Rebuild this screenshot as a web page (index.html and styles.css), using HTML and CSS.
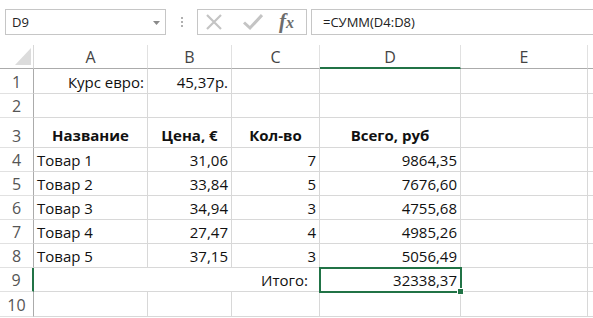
FILE: index.html
```html
<!DOCTYPE html>
<html lang="ru">
<head>
<meta charset="utf-8">
<link rel="stylesheet" href="styles.css">
</head>
<body>
<div class="app">
  <div class="fbar">
    <div class="namebox">
      <span class="nb-text">D9</span>
      <svg class="nb-arrow" width="7" height="4" viewBox="0 0 7 4"><path d="M0 0h7L3.5 4z" fill="#8a8a8a"/></svg>
    </div>
    <div class="dots"><i></i><i></i><i></i></div>
    <div class="iconbox">
      <svg class="ic ic-x" width="18" height="18" viewBox="0 0 18 18"><path d="M2 2L16 16M16 2L2 16" stroke="#c4c4c4" stroke-width="2.2" fill="none"/></svg>
      <svg class="ic ic-ok" width="20" height="18" viewBox="0 0 20 18"><path d="M1 9.5L7 15L19 2" stroke="#c4c4c4" stroke-width="3" fill="none"/></svg>
      <span class="fx">f<span class="fx-x">x</span></span>
    </div>
    <div class="formula">=СУММ(D4:D8)</div>
  </div>

  <div class="sheet">
    <div class="corner"><span class="tri"></span></div>
    <div class="ch">A</div>
    <div class="ch">B</div>
    <div class="ch">C</div>
    <div class="ch ch-sel">D</div>
    <div class="ch">E</div>
    <div class="ch ch-f"></div>

    <div class="rh">1</div>
    <div class="c r">Курс евро:</div>
    <div class="c r">45,37р.</div>
    <div class="c"></div>
    <div class="c"></div>
    <div class="c"></div>
    <div class="c cf"></div>

    <div class="rh">2</div>
    <div class="c"></div><div class="c"></div><div class="c"></div><div class="c"></div><div class="c"></div><div class="c cf"></div>

    <div class="rh">3</div>
    <div class="c m b">Название</div>
    <div class="c m b">Цена, €</div>
    <div class="c m b">Кол-во</div>
    <div class="c m b">Всего, руб</div>
    <div class="c"></div>
    <div class="c cf"></div>

    <div class="rh">4</div>
    <div class="c">Товар 1</div><div class="c r">31,06</div><div class="c r">7</div><div class="c r">9864,35</div><div class="c"></div><div class="c cf"></div>
    <div class="rh">5</div>
    <div class="c">Товар 2</div><div class="c r">33,84</div><div class="c r">5</div><div class="c r">7676,60</div><div class="c"></div><div class="c cf"></div>
    <div class="rh">6</div>
    <div class="c">Товар 3</div><div class="c r">34,94</div><div class="c r">3</div><div class="c r">4755,68</div><div class="c"></div><div class="c cf"></div>
    <div class="rh">7</div>
    <div class="c">Товар 4</div><div class="c r">27,47</div><div class="c r">4</div><div class="c r">4985,26</div><div class="c"></div><div class="c cf"></div>
    <div class="rh">8</div>
    <div class="c">Товар 5</div><div class="c r">37,15</div><div class="c r">3</div><div class="c r">5056,49</div><div class="c"></div><div class="c cf"></div>

    <div class="rh rh-sel">9</div>
    <div class="c r merge3">Итого:</div>
    <div class="c r sel">32338,37<span class="handle"></span></div>
    <div class="c"></div>
    <div class="c cf"></div>

    <div class="rh">10</div>
    <div class="c"></div><div class="c"></div><div class="c"></div><div class="c"></div><div class="c"></div><div class="c cf"></div>
  </div>
</div>
</body>
</html>
```

FILE: styles.css
```css
html, body {
  margin: 0;
  padding: 0;
  background: #fff;
}
.app {
  width: 593px;
  height: 318px;
  overflow: hidden;
  font-family: "Open Sans", "Liberation Sans", sans-serif;
}
.fbar {
  height: 45px;
  display: flex;
  align-items: flex-start;
  padding-top: 9px;
  box-sizing: border-box;
  padding-left: 5px;
}
.namebox {
  width: 161px;
  height: 26px;
  box-sizing: border-box;
  border: 1px solid #c6c6c6;
  display: flex;
  align-items: center;
  justify-content: space-between;
  padding: 0 5px 0 6px;
}
.nb-text {
  font-family: "Open Sans", sans-serif;
  font-size: 13px;
  color: #222;
}
.nb-arrow { margin-top: 1px; }
.dots {
  width: 31px;
  height: 26px;
  display: flex;
  flex-direction: column;
  align-items: center;
  justify-content: center;
  gap: 2px;
}
.dots i {
  display: block;
  width: 2px;
  height: 2px;
  background: #b0b0b0;
}
.iconbox {
  width: 110px;
  height: 26px;
  box-sizing: border-box;
  border: 1px solid #c6c6c6;
  display: flex;
  align-items: center;
  padding-left: 7px;
}
.ic-x { margin-right: 20px; }
.ic-ok { margin-right: 16px; }
.fx {
  font-family: "Liberation Serif", "DejaVu Serif", serif;
  font-style: italic;
  font-weight: bold;
  font-size: 21px;
  color: #6d6d6d;
  line-height: 1;
  margin-top: -2px;
}
.fx-x { font-size: 16px; }
.formula {
  flex: 1;
  height: 26px;
  margin-left: 4px;
  box-sizing: border-box;
  border: 1px solid #c6c6c6;
  border-right: none;
  font-size: 13px;
  color: #222;
  display: flex;
  align-items: center;
  padding-left: 11px;
}

.sheet {
  display: grid;
  grid-template-columns: 34px 114px 84px 88px 141px 127px 5px;
  grid-template-rows: 24px 25px 24px 30px 24px 24px 24px 24px 24px 24px 25px;
  font-size: 15px;
  color: #111;
}
.corner, .ch, .rh, .c {
  box-sizing: border-box;
  border-right: 1px solid #d8d8d8;
  border-bottom: 1px solid #d8d8d8;
}
.corner {
  position: relative;
  border-bottom-color: #ababab;
  border-right-color: #d8d8d8;
}
.tri {
  position: absolute;
  right: 2px;
  bottom: 3px;
  width: 0;
  height: 0;
  border-left: 16px solid transparent;
  border-bottom: 17px solid #dcdcdc;
}
.ch {
  display: flex;
  align-items: center;
  justify-content: center;
  color: #444;
  font-size: 16px;
  border-bottom-color: #ababab;
  border-right-color: #e1e1e1;
}
.ch-sel {
  border-bottom: 2px solid #217346;
  padding-top: 1px;
}
.ch-f { border-right: none; }
.rh {
  display: flex;
  align-items: flex-end;
  justify-content: center;
  padding-bottom: 0;
  color: #555;
  font-size: 16px;
  border-right-color: #ababab;
  border-bottom-color: #e1e1e1;
}
.rh-sel {
  border-right: 2px solid #217346;
}
.c {
  display: flex;
  align-items: flex-end;
  padding: 0 3px 0 3px;
  line-height: 21px;
  white-space: nowrap;
}
.cf { border-right: none; padding: 0; }
.r { justify-content: flex-end; }
.m { justify-content: center; line-height: 24px; }
.b { font-weight: bold; }
.merge3 { grid-column: span 3; padding-right: 11px; }
.sel {
  position: relative;
  outline: 2px solid #217346;
  outline-offset: -1px;
  z-index: 1;
}
.handle {
  position: absolute;
  right: -4px;
  bottom: -4px;
  width: 5px;
  height: 5px;
  background: #217346;
  border: 1px solid #fff;
}
```
